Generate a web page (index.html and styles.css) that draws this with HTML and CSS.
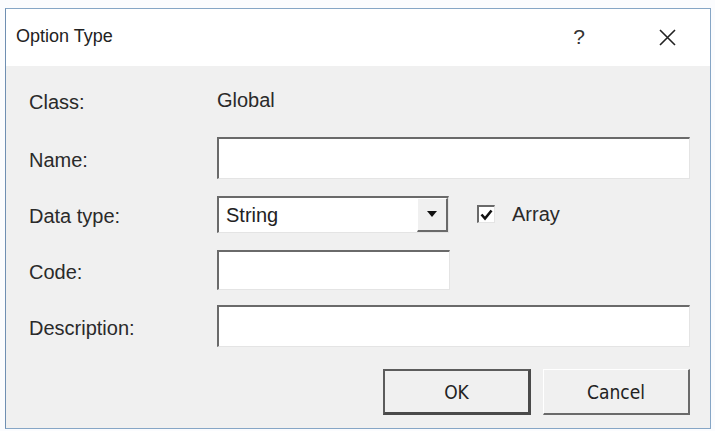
FILE: index.html
```html
<!DOCTYPE html>
<html lang="en">

<head>
    <meta charset="UTF-8">
    <meta name="viewport" content="width=device-width, initial-scale=1.0">
    <title>Option Type</title>
    <link rel="stylesheet" href="styles.css">
</head>

<body>
    <div class="window">
        <div class="titlebar">
            <span class="title">Option Type</span>
            <span class="help">?</span>
            <svg class="close" width="19" height="17" viewBox="0 0 19 17">
                <path d="M2 1 L17 16 M17 1 L2 16" stroke="#222" stroke-width="1.6" fill="none" />
            </svg>
        </div>

        <div class="form">
            <div class="row row-first">
                <span class="label">Class:</span>
                <span class="value">Global</span>
            </div>
            <div class="row">
                <span class="label">Name:</span>
                <div class="field field-wide"></div>
            </div>
            <div class="row">
                <span class="label">Data type:</span>
                <div class="field select">
                    <span class="select-text">String</span>
                    <span class="drop-btn"><span class="arrow"></span></span>
                </div>
                <div class="check">
                    <span class="check-box">
                        <svg width="13" height="12" viewBox="0 0 13 12">
                            <path d="M1.5 5.5 L5 9.5 L11.5 1.5" stroke="#111" stroke-width="2.6" fill="none" />
                        </svg>
                    </span>
                    <span class="check-label">Array</span>
                </div>
            </div>
            <div class="row">
                <span class="label">Code:</span>
                <div class="field field-short"></div>
            </div>
            <div class="row">
                <span class="label">Description:</span>
                <div class="field field-wide"></div>
            </div>

            <div class="button-container">
                <button class="button button-default">OK</button>
                <button class="button">Cancel</button>
            </div>
        </div>
    </div>
</body>

</html>
```

FILE: styles.css
```css
body {
    margin: 0;
    background-color: #fbfcfe;
    font-family: "Liberation Sans", Arial, sans-serif;
    color: #222;
}

.window {
    margin: 8px 4px 0 5px;
    height: 419px;
    border: 1px solid #86a6c6;
    border-left-color: #6f8fb2;
    background-color: #f0f0f0;
    display: flex;
    flex-direction: column;
}

.titlebar {
    height: 57px;
    background-color: #ffffff;
    display: flex;
    align-items: center;
    padding-left: 10px;
}

.title {
    font-size: 18px;
    flex: 1;
    padding-bottom: 2px;
}

.help {
    font-size: 21px;
    margin-right: 73px;
    padding-bottom: 2px;
    color: #333;
}

.close {
    margin-right: 33px;
}

.form {
    padding: 12px 20px 0 23px;
    display: flex;
    flex-direction: column;
    gap: 16px;
}

.row {
    display: flex;
    align-items: center;
    height: 40px;
}

.row-first {
    height: 44px;
}

.label {
    width: 188px;
    font-size: 20px;
    padding-top: 4px;
    color: #2a2a2a;
}

.value {
    font-size: 20px;
    color: #2a2a2a;
}

.field {
    box-sizing: border-box;
    height: 40px;
    background-color: #ffffff;
    border-style: solid;
    border-width: 2px 1px 1px 2px;
    border-color: #6a6a6a #e4e4e4 #e4e4e4 #6a6a6a;
}

.field-wide {
    flex: 1;
    height: 42px;
}

.field-short {
    width: 233px;
}

.select {
    width: 232px;
    height: 37px;
    display: flex;
    align-items: center;
}

.select-text {
    flex: 1;
    font-size: 20px;
    padding-left: 7px;
    padding-top: 2px;
}

.drop-btn {
    box-sizing: border-box;
    width: 31px;
    height: 100%;
    background-color: #f0f0f0;
    border-style: solid;
    border-width: 1px 2px 2px 1px;
    border-color: #ffffff #6a6a6a #6a6a6a #ffffff;
    display: flex;
    align-items: center;
    justify-content: center;
}

.arrow {
    width: 0;
    height: 0;
    border-left: 5px solid transparent;
    border-right: 5px solid transparent;
    border-top: 6px solid #111;
}

.check {
    display: flex;
    align-items: center;
    margin-left: 28px;
}

.check-box {
    box-sizing: border-box;
    width: 18px;
    height: 18px;
    background-color: #ffffff;
    border-style: solid;
    border-width: 2px 1px 1px 2px;
    border-color: #6a6a6a #e4e4e4 #e4e4e4 #6a6a6a;
    display: flex;
    align-items: center;
    justify-content: center;
}

.check-label {
    font-size: 20px;
    margin-left: 17px;
    color: #2a2a2a;
}

.button-container {
    display: flex;
    justify-content: flex-end;
    gap: 12px;
    margin-top: 7px;
}

.button {
    box-sizing: border-box;
    width: 147px;
    height: 46px;
    font-family: "DejaVu Sans Condensed", "Liberation Sans", sans-serif;
    font-size: 19px;
    color: #222;
    background-color: #f0f0f0;
    border-style: solid;
    border-width: 1px 2px 2px 1px;
    border-color: #ffffff #6a6a6a #6a6a6a #ffffff;
    padding: 0;
}

.button-default {
    width: 148px;
    border-width: 2px 3px 3px 2px;
    border-color: #5c5c5c #4a4a4a #4a4a4a #5c5c5c;
}
```
